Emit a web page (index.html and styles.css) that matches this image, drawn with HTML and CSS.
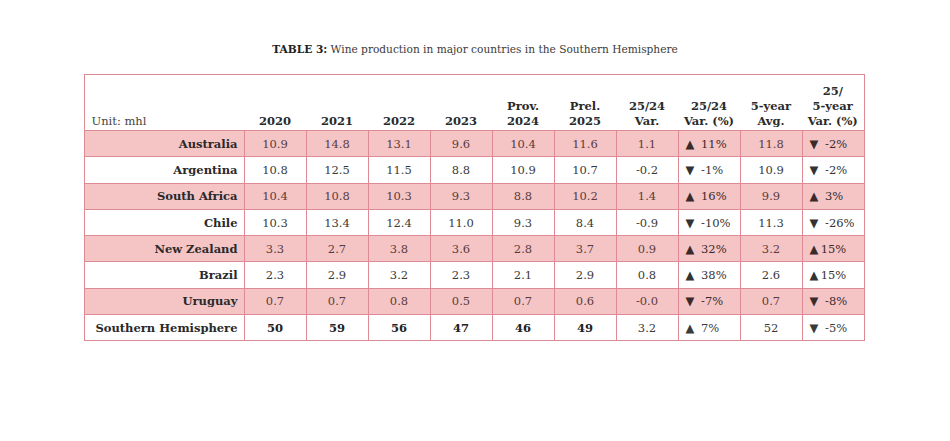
FILE: index.html
```html
<!DOCTYPE html>
<html>
<head>
<meta charset="utf-8">
<link rel="stylesheet" href="styles.css">
</head>
<body>
<div class="page">
  <p class="caption"><b>TABLE 3:</b> Wine production in major countries in the Southern Hemisphere</p>
  <table class="wine">
    <colgroup>
      <col class="c-name"><col class="c-num"><col class="c-num"><col class="c-num"><col class="c-num"><col class="c-num"><col class="c-num"><col class="c-num"><col class="c-num"><col class="c-num"><col class="c-num">
    </colgroup>
    <thead>
      <tr>
        <th class="unit">Unit: mhl</th>
        <th>2020</th><th>2021</th><th>2022</th><th>2023</th>
        <th>Prov.<br>2024</th><th>Prel.<br>2025</th><th>25/24<br>Var.</th>
        <th>25/24<br>Var. (%)</th><th>5-year<br>Avg.</th><th>25/<br>5-year<br>Var. (%)</th>
      </tr>
    </thead>
    <tbody>
      <tr class="pink"><th>Australia</th><td>10.9</td><td>14.8</td><td>13.1</td><td>9.6</td><td>10.4</td><td>11.6</td><td>1.1</td><td class="v">▲ 11%</td><td>11.8</td><td class="v">▼ -2%</td></tr>
      <tr><th>Argentina</th><td>10.8</td><td>12.5</td><td>11.5</td><td>8.8</td><td>10.9</td><td>10.7</td><td>-0.2</td><td class="v">▼ -1%</td><td>10.9</td><td class="v">▼ -2%</td></tr>
      <tr class="pink"><th>South Africa</th><td>10.4</td><td>10.8</td><td>10.3</td><td>9.3</td><td>8.8</td><td>10.2</td><td>1.4</td><td class="v">▲ 16%</td><td>9.9</td><td class="v">▲ 3%</td></tr>
      <tr><th>Chile</th><td>10.3</td><td>13.4</td><td>12.4</td><td>11.0</td><td>9.3</td><td>8.4</td><td>-0.9</td><td class="v">▼ -10%</td><td>11.3</td><td class="v">▼ -26%</td></tr>
      <tr class="pink"><th>New Zealand</th><td>3.3</td><td>2.7</td><td>3.8</td><td>3.6</td><td>2.8</td><td>3.7</td><td>0.9</td><td class="v">▲ 32%</td><td>3.2</td><td class="v">▲&#8201;15%</td></tr>
      <tr><th>Brazil</th><td>2.3</td><td>2.9</td><td>3.2</td><td>2.3</td><td>2.1</td><td>2.9</td><td>0.8</td><td class="v">▲ 38%</td><td>2.6</td><td class="v">▲&#8201;15%</td></tr>
      <tr class="pink"><th>Uruguay</th><td>0.7</td><td>0.7</td><td>0.8</td><td>0.5</td><td>0.7</td><td>0.6</td><td>-0.0</td><td class="v">▼ -7%</td><td>0.7</td><td class="v">▼ -8%</td></tr>
      <tr class="total"><th>Southern Hemisphere</th><td>50</td><td>59</td><td>56</td><td>47</td><td>46</td><td>49</td><td class="reg">3.2</td><td class="v reg">▲ 7%</td><td class="reg">52</td><td class="v reg">▼ -5%</td></tr>
    </tbody>
  </table>
</div>
</body>
</html>
```
FILE: styles.css
```css
html, body {
  margin: 0;
  padding: 0;
  background: #ffffff;
}
body {
  font-family: "DejaVu Serif", "Liberation Serif", serif;
  color: #2b2b2b;
}
.page {
  width: 950px;
  height: 441px;
  display: flex;
  flex-direction: column;
  align-items: center;
  padding-top: 42px;
  box-sizing: border-box;
}
.caption {
  margin: 0 0 17px 0;
  font-size: 10.6px;
  line-height: 15px;
  color: #3a3a3a;
}
.caption b {
  color: #222;
}
.wine {
  border-collapse: collapse;
  border: 1.5px solid #de8a95;
  table-layout: fixed;
  width: 780px;
  font-size: 11.5px;
  margin-left: -2px;
}
.c-name { width: 160px; }
.c-num { width: 62px; }
.wine thead th {
  height: 54px;
  vertical-align: bottom;
  padding: 0 0 1px 0;
  font-weight: bold;
  line-height: 15px;
  text-align: center;
  border-bottom: 1px solid #de8a95;
  color: #2a2a2a;
}
.wine thead th.unit {
  text-align: left;
  padding-left: 7px;
  font-weight: normal;
  color: #444;
}
.wine tbody th,
.wine tbody td {
  height: 25.3px;
  padding: 0;
  border: 1px solid #de8a95;
  line-height: 14px;
}
.wine tbody th {
  text-align: right;
  padding-right: 6px;
  font-weight: bold;
  color: #2a2a2a;
}
.wine tbody td {
  text-align: center;
  color: #3a3a3a;
}
.wine tbody td.v {
  text-align: left;
  padding-left: 7px;
  word-spacing: 3px;
  color: #333;
}
.wine tr.pink th,
.wine tr.pink td {
  background: #f5c5c6;
}
.wine tr.pink td {
  color: #5a3b3b;
}
.wine tr.pink td.v {
  color: #3a2a2a;
}
.wine tr.total td {
  font-weight: bold;
  color: #222;
}
.wine tr.total td.reg {
  font-weight: normal;
  color: #3a3a3a;
}
```
